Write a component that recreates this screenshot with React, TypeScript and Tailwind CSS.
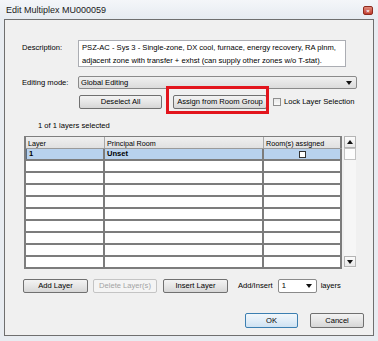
import React from "react";

const font = { fontFamily: '"Liberation Sans", Arial, sans-serif' };

function WinButton({
  label,
  className = "",
  disabled = false,
  isDefault = false,
}: {
  label: string;
  className?: string;
  disabled?: boolean;
  isDefault?: boolean;
}) {
  return (
    <div
      className={`flex items-center justify-center rounded-[2px] border text-[7.6px] leading-none ${
        disabled
          ? "border-[#c4c4c4] bg-[#f4f4f4] text-[#a3a3a3]"
          : isDefault
          ? "border-[#3c7fb1] bg-gradient-to-b from-[#f2f7fb] via-[#e2eef8] to-[#cfe2f2] text-black"
          : "border-[#707070] bg-gradient-to-b from-[#f3f3f3] via-[#e6e6e6] to-[#d6d6d6] text-black"
      } ${className}`}
    >
      {label}
    </div>
  );
}

function Arrow({ up = false }: { up?: boolean }) {
  return (
    <svg width="6" height="4" viewBox="0 0 6 4">
      {up ? <path d="M0 4 L3 0 L6 4 Z" fill="#111" /> : <path d="M0 0 L6 0 L3 4 Z" fill="#111" />}
    </svg>
  );
}

export default function App() {
  const rows = Array.from({ length: 10 }, (_, i) => i);

  return (
    <div className="w-[378px] h-[341px] bg-[#e8ecf1] overflow-hidden text-black" style={font}>
      {/* Title bar */}
      <div className="h-[19px] flex items-center justify-between pl-[6px] pr-[5px] pt-[2px] bg-gradient-to-b from-[#f4f6f9] to-[#e6ebf1]">
        <span className="text-[9px] leading-none text-[#1a1a1a]">Edit Multiplex MU000059</span>
        <div className="w-[10px] h-[9px] rounded-[2px] bg-gradient-to-b from-[#e08a7c] to-[#c0392b] border border-[#8e2a1e] flex items-center justify-center">
          <span className="text-white text-[6px] leading-none font-bold">×</span>
        </div>
      </div>

      {/* Client area */}
      <div className="ml-[4px] w-[370px] h-[317px] border border-[#6f6f6f] bg-[#f0f0f0] flex flex-col text-[7.6px]">
        {/* Description */}
        <div className="flex items-start mt-[20px] ml-[17px]">
          <span className="w-[56px] pt-[1px] leading-[13px]">Description:</span>
          <div className="w-[268px] h-[27px] border border-[#abadb3] bg-white px-[3px] leading-[13px] whitespace-nowrap overflow-hidden">
            PSZ-AC - Sys 3 - Single-zone, DX cool, furnace, energy recovery, RA plnm,
            <br />
            adjacent zone with transfer + exhst (can supply other zones w/o T-stat).
          </div>
        </div>

        {/* Editing mode */}
        <div className="flex items-center mt-[9px] ml-[17px]">
          <span className="w-[56px] leading-none">Editing mode:</span>
          <div className="w-[279px] h-[13px] border border-[#8a8a8a] rounded-[2px] bg-gradient-to-b from-[#f0f0f0] to-[#dcdcdc] flex items-center justify-between pl-[2px] pr-[4px]">
            <span className="leading-none">Global Editing</span>
            <Arrow />
          </div>
        </div>

        {/* Buttons row */}
        <div className="flex items-center mt-[6px] ml-[74px]">
          <WinButton label="Deselect All" className="w-[83px] h-[14px]" />
          <div className="relative ml-[11px]">
            <WinButton label="Assign from Room Group" className="w-[94px] h-[14px]" />
            <div className="absolute -left-[7px] -top-[9px] w-[103px] h-[28px] border-[3px] border-[#e2141c] pointer-events-none" />
          </div>
          <div className="ml-[6px] w-[8px] h-[8px] border border-[#8f8f8f] bg-gradient-to-b from-[#e9e9e9] to-[#fafafa]" />
          <span className="ml-[3px] leading-none">Lock Layer Selection</span>
        </div>

        {/* Selection count */}
        <div className="mt-[12px] ml-[33px] leading-[10px]">1 of 1 layers selected</div>

        {/* Grid */}
        <div className="flex mt-[5px] ml-[19px]">
          <div className="w-[318px] border-l-2 border-t border-[#7e7e7e] bg-white">
            <div className="grid grid-cols-[79px_159px_78px] h-[12px] bg-gradient-to-b from-[#f0f0f0] to-[#e0e0e0] border-b border-[#9a9a9a] text-[7.2px] leading-none">
              <div className="border-r border-[#a8a8a8] pl-[2px] flex items-end pb-[1px]">Layer</div>
              <div className="border-r border-[#a8a8a8] pl-[2px] flex items-end pb-[1px]">Principal Room</div>
              <div className="border-r-2 border-[#7e7e7e] pl-[2px] flex items-end pb-[1px]">Room(s) assigned</div>
            </div>
            {rows.map((i) => (
              <div
                key={i}
                className={`grid grid-cols-[79px_159px_78px] h-[12px] border-b-2 border-[#7c7c7c] ${
                  i === 0 ? "bg-[#b8d2ee]" : "bg-white"
                }`}
              >
                <div
                  className={`border-r-2 border-[#7c7c7c] pl-[2px] flex items-center font-bold leading-none ${
                    i === 0 ? "border-l border-l-[#5a6f87]" : ""
                  }`}
                >
                  {i === 0 ? "1" : ""}
                </div>
                <div className="border-r-2 border-[#7c7c7c] pl-[2px] flex items-center font-bold leading-none">
                  {i === 0 ? "Unset" : ""}
                </div>
                <div className="border-r-2 border-[#7c7c7c] flex items-center justify-center">
                  {i === 0 && <div className="w-[7px] h-[7px] border border-[#333] bg-white" />}
                </div>
              </div>
            ))}
          </div>
          {/* Scrollbar */}
          <div className="ml-[2px] w-[12px] h-[132px] bg-[#f6f6f6] flex flex-col justify-between">
            <div className="flex flex-col">
              <div className="h-[12px] border border-[#b4b4b4] bg-gradient-to-b from-[#fbfbfb] to-[#e9e9e9] flex items-center justify-center">
                <Arrow up />
              </div>
              <div className="h-[12px] border border-[#c2c2c2] bg-[#fdfdfd]" />
            </div>
            <div className="h-[11px] mb-[1px] border border-[#b4b4b4] bg-gradient-to-b from-[#fbfbfb] to-[#e9e9e9] flex items-center justify-center">
              <Arrow />
            </div>
          </div>
        </div>

        {/* Layer actions */}
        <div className="flex items-center mt-[10px] ml-[18px]">
          <WinButton label="Add Layer" className="w-[65px] h-[14px]" />
          <WinButton label="Delete Layer(s)" disabled className="ml-[5px] w-[64px] h-[14px]" />
          <WinButton label="Insert Layer" className="ml-[6px] w-[65px] h-[14px]" />
          <span className="ml-[10px] leading-none">Add/Insert</span>
          <div className="ml-[5px] w-[39px] h-[14px] border border-[#8a8a8a] rounded-[2px] bg-white flex items-center justify-between pl-[3px] pr-[4px]">
            <span className="leading-none">1</span>
            <Arrow />
          </div>
          <span className="ml-[4px] leading-none">layers</span>
        </div>

        {/* OK / Cancel */}
        <div className="flex items-center mt-[20px] ml-[240px]">
          <WinButton label="OK" isDefault className="w-[53px] h-[15px]" />
          <WinButton label="Cancel" className="ml-[12px] w-[54px] h-[15px]" />
        </div>
      </div>
    </div>
  );
}
